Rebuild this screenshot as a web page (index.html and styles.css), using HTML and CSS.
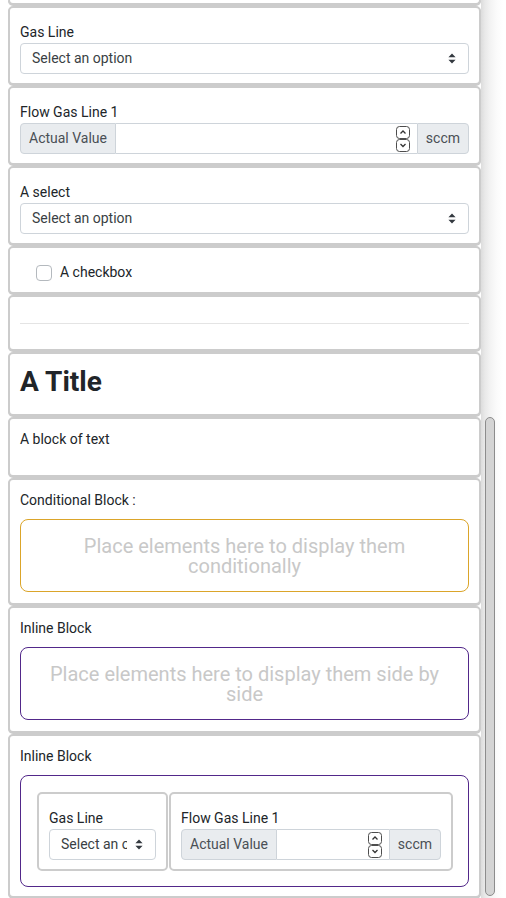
FILE: index.html
```html
<!DOCTYPE html>
<html lang="en">
<head>
<meta charset="utf-8">
<title>Form builder</title>
<link rel="stylesheet" href="styles.css">
</head>
<body>
<div class="page">
  <main class="column">
    <div class="card card-edge"></div>

    <div class="card">
      <label class="lbl">Gas Line</label>
      <div class="select">
        <span class="select-text">Select an option</span>
        <svg class="sort" width="8" height="11" viewBox="0 0 8 11"><path d="M4 0.5 L7.6 4.3 H0.4 Z M4 10.5 L7.6 6.7 H0.4 Z" fill="#343a40"/></svg>
      </div>
    </div>

    <div class="card">
      <label class="lbl">Flow Gas Line 1</label>
      <div class="igroup">
        <span class="addon addon-l">Actual Value</span>
        <span class="num">
          <svg class="spin" width="14" height="26" viewBox="0 0 14 26"><rect x="0.5" y="0.5" width="13" height="12" rx="3" fill="#fff" stroke="#4d4d4d"/><rect x="0.5" y="13.5" width="13" height="12" rx="3" fill="#fff" stroke="#4d4d4d"/><path d="M4.5 7.5 L7 5 L9.5 7.5 M4.5 18 L7 20.5 L9.5 18" fill="none" stroke="#333" stroke-width="1.3"/></svg>
        </span>
        <span class="addon addon-r">sccm</span>
      </div>
    </div>

    <div class="card">
      <label class="lbl">A select</label>
      <div class="select">
        <span class="select-text">Select an option</span>
        <svg class="sort" width="8" height="11" viewBox="0 0 8 11"><path d="M4 0.5 L7.6 4.3 H0.4 Z M4 10.5 L7.6 6.7 H0.4 Z" fill="#343a40"/></svg>
      </div>
    </div>

    <div class="card">
      <div class="check"><span class="box"></span><span>A checkbox</span></div>
    </div>

    <div class="card">
      <hr class="rule">
    </div>

    <div class="card">
      <h2 class="title">A Title</h2>
    </div>

    <div class="card">
      <p class="text">A block of text</p>
    </div>

    <div class="card">
      <div class="blk-lbl">Conditional Block :</div>
      <div class="drop drop-cond">Place elements here to display them conditionally</div>
    </div>

    <div class="card">
      <div class="blk-lbl">Inline Block</div>
      <div class="drop drop-inline">Place elements here to display them side by side</div>
    </div>

    <div class="card">
      <div class="blk-lbl">Inline Block</div>
      <div class="inline-box">
        <div class="card sub sub-narrow">
          <label class="lbl">Gas Line</label>
          <div class="select">
            <span class="select-text">Select an option</span>
            <svg class="sort" width="8" height="11" viewBox="0 0 8 11"><path d="M4 0.5 L7.6 4.3 H0.4 Z M4 10.5 L7.6 6.7 H0.4 Z" fill="#343a40"/></svg>
          </div>
        </div>
        <div class="card sub sub-wide">
          <label class="lbl">Flow Gas Line 1</label>
          <div class="igroup">
            <span class="addon addon-l">Actual Value</span>
            <span class="num">
              <svg class="spin" width="14" height="26" viewBox="0 0 14 26"><rect x="0.5" y="0.5" width="13" height="12" rx="3" fill="#fff" stroke="#4d4d4d"/><rect x="0.5" y="13.5" width="13" height="12" rx="3" fill="#fff" stroke="#4d4d4d"/><path d="M4.5 7.5 L7 5 L9.5 7.5 M4.5 18 L7 20.5 L9.5 18" fill="none" stroke="#333" stroke-width="1.3"/></svg>
            </span>
            <span class="addon addon-r">sccm</span>
          </div>
        </div>
      </div>
    </div>
  </main>
  <div class="side"><div class="thumb"></div></div>
</div>
</body>
</html>
```

FILE: styles.css
```css
* { box-sizing: border-box; }
html, body { margin: 0; padding: 0; }
body {
  font-family: Roboto, "Liberation Sans", sans-serif;
  font-size: 14px;
  line-height: 21px;
  color: #212529;
  background: #fff;
}
.page {
  display: flex;
  height: 898px;
  overflow: hidden;
}
.column {
  width: 473px;
  margin-left: 8px;
  flex: none;
}
.card {
  background: #fff;
  border: 2px solid #cccccc;
  border-radius: 5px;
  padding: 10px 10px 9px;
  margin-bottom: 1px;
  box-shadow: 0 1px 0 #cccccc;
}
.card-edge {
  height: 5px;
  padding: 0;
  border-top: none;
  border-radius: 0 0 5px 5px;
}
.lbl {
  display: block;
  padding-top: 4px;
  line-height: 21px;
}
.select {
  display: flex;
  align-items: center;
  height: 31px;
  border: 1px solid #ced4da;
  border-radius: 4px;
  padding: 0 12px 0 11px;
  color: #3a3f44;
}
.select-text {
  flex: 1;
  min-width: 0;
  overflow: hidden;
  white-space: nowrap;
}
.sort { flex: none; margin-left: 8px; }
.igroup {
  display: flex;
  height: 31px;
}
.addon {
  display: flex;
  align-items: center;
  padding: 0 8px;
  background: #e9ecef;
  border: 1px solid #ced4da;
  color: #4a4f55;
  white-space: nowrap;
}
.addon-l { border-radius: 4px 0 0 4px; }
.addon-r { border-radius: 0 4px 4px 0; }
.num {
  flex: 1;
  display: flex;
  align-items: center;
  justify-content: flex-end;
  padding-right: 7px;
  border-top: 1px solid #ced4da;
  border-bottom: 1px solid #ced4da;
}
.spin { display: block; }
.check {
  display: flex;
  align-items: center;
  padding: 4px 0 0 16px;
  height: 25px;
}
.box {
  width: 16px;
  height: 16px;
  border: 1px solid #b4b9be;
  border-radius: 4px;
  margin-right: 8px;
}
.rule {
  border: 0;
  border-top: 1px solid #e4e4e4;
  margin: 16px 0;
}
.title {
  margin: 0 0 7px;
  padding-top: 1px;
  font-size: 28px;
  line-height: 33px;
  font-weight: 700;
}
.text { margin: 0 0 16px; }
.blk-lbl {
  line-height: 21px;
  margin-bottom: 8px;
}
.drop {
  border: 1px solid;
  border-radius: 8px;
  padding: 16px 16px 15px;
  text-align: center;
  color: #c8c8c8;
  font-size: 20px;
  line-height: 20px;
  margin-bottom: 2px;
}
.drop-cond { border-color: #dba52a; }
.drop-inline { border-color: #52288a; }
.inline-box {
  display: flex;
  gap: 1px;
  border: 1px solid #52288a;
  border-radius: 8px;
  padding: 16px 15px 15px 16px;
}
.sub { margin-bottom: 0; box-shadow: none; }
.sub-narrow { width: 131px; flex: none; }
.sub-wide { flex: 1; }
.side {
  flex: 1;
  padding: 417px 0 0 4px;
  background: linear-gradient(90deg, #dcdcdc 0, #e9e9e9 4px, #f4f4f4 10px, #fbfbfb 16px, #fff 22px);
}
.thumb {
  width: 10px;
  height: 479px;
  border: 1px solid #8c8c8c;
  border-radius: 6px;
  background: #d4d4d4;
}
```
